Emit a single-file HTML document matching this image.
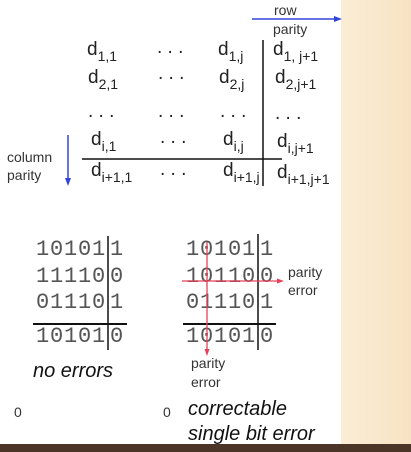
<!DOCTYPE html>
<html><head><style>
body{margin:0;width:411px;height:452px;overflow:hidden;background:#fff;position:relative;font-family:"Liberation Sans",sans-serif;color:#222}
.bg{position:absolute;left:341px;top:0;width:70px;height:452px;background:linear-gradient(90deg,#fbedd5,#f7e3c3)}
.bot{position:absolute;left:0;top:444px;width:411px;height:8px;background:#4a3526}
.a{position:absolute;white-space:nowrap;line-height:1}
.d{font-size:19px}
.d sub{font-size:14px;vertical-align:-6px}
.m{font-family:"Liberation Mono",monospace;font-size:22px;letter-spacing:0.8px;color:#555}
.s{font-size:14px;color:#333}
.it{font-style:italic;font-size:20px;color:#111}
</style></head><body>
<div class="bg"></div><div class="bot"></div>
<svg width="411" height="452" style="position:absolute;left:0;top:0">
<line x1="252" y1="19" x2="336" y2="19" stroke="#3344dd" stroke-width="1.5"/><polygon points="342,19 334,16 334,22" fill="#3344dd"/>
<line x1="68" y1="135" x2="68" y2="180" stroke="#3344dd" stroke-width="1.5"/><polygon points="68,186 65,178 71,178" fill="#3344dd"/>
<line x1="263" y1="40" x2="263" y2="186" stroke="#111" stroke-width="1.5"/>
<line x1="82" y1="159" x2="282" y2="159" stroke="#111" stroke-width="1.5"/>
<line x1="108" y1="236" x2="108" y2="350" stroke="#111" stroke-width="1.5"/>
<line x1="33" y1="324" x2="127" y2="324" stroke="#111" stroke-width="2"/>
<line x1="258" y1="234" x2="258" y2="350" stroke="#111" stroke-width="1.5"/>
<line x1="183" y1="324" x2="276" y2="324" stroke="#111" stroke-width="2"/>
</svg>
<div class="a s" style="left:274px;top:3px">row</div>
<div class="a s" style="left:273px;top:22px">parity</div>
<div class="a s" style="left:7px;top:150px">column</div>
<div class="a s" style="left:7px;top:168px">parity</div>

<div class="a d" style="left:87px;top:40px">d<sub>1,1</sub></div>
<div class="a d" style="left:157px;top:38px">. . .</div>
<div class="a d" style="left:218px;top:40px">d<sub>1,j</sub></div>
<div class="a d" style="left:273px;top:40px">d<sub>1, j+1</sub></div>

<div class="a d" style="left:88px;top:68px">d<sub>2,1</sub></div>
<div class="a d" style="left:158px;top:64px">. . .</div>
<div class="a d" style="left:219px;top:68px">d<sub>2,j</sub></div>
<div class="a d" style="left:275px;top:68px">d<sub>2,j+1</sub></div>

<div class="a d" style="left:88px;top:102px">. . .</div>
<div class="a d" style="left:158px;top:102px">. . .</div>
<div class="a d" style="left:220px;top:102px">. . .</div>
<div class="a d" style="left:275px;top:104px">. . .</div>

<div class="a d" style="left:91px;top:130px">d<sub>i,1</sub></div>
<div class="a d" style="left:160px;top:128px">. . .</div>
<div class="a d" style="left:223px;top:130px">d<sub>i,j</sub></div>
<div class="a d" style="left:277px;top:132px">d<sub>i,j+1</sub></div>

<div class="a d" style="left:91px;top:161px">d<sub>i+1,1</sub></div>
<div class="a d" style="left:160px;top:160px">. . .</div>
<div class="a d" style="left:223px;top:161px">d<sub>i+1,j</sub></div>
<div class="a d" style="left:277px;top:163px">d<sub>i+1,j+1</sub></div>

<div class="a m" style="left:36px;top:239px">10101</div><div class="a m" style="left:110px;top:239px">1</div>
<div class="a m" style="left:36px;top:266px">11110</div><div class="a m" style="left:110px;top:266px">0</div>
<div class="a m" style="left:36px;top:292px">01110</div><div class="a m" style="left:110px;top:292px">1</div>
<div class="a m" style="left:36px;top:326px">10101</div><div class="a m" style="left:110px;top:326px">0</div>

<div class="a m" style="left:186px;top:239px">10101</div><div class="a m" style="left:260px;top:239px">1</div>
<div class="a m" style="left:186px;top:266px">10110</div><div class="a m" style="left:260px;top:266px">0</div>
<div class="a m" style="left:186px;top:292px">01110</div><div class="a m" style="left:260px;top:292px">1</div>
<div class="a m" style="left:186px;top:326px">10101</div><div class="a m" style="left:260px;top:326px">0</div>

<svg width="411" height="452" style="position:absolute;left:0;top:0">
<line x1="182" y1="281" x2="278" y2="281" stroke="#e8405a" stroke-width="1.3"/><polygon points="284,281 277,278.5 277,283.5" fill="#e8405a"/>
<line x1="207" y1="242" x2="207" y2="350" stroke="#e8405a" stroke-width="1.3"/><polygon points="207,356 204.5,349 209.5,349" fill="#e8405a"/>
</svg>
<div class="a s" style="left:288px;top:265px">parity</div>
<div class="a s" style="left:288px;top:283px">error</div>
<div class="a s" style="left:191px;top:356px">parity</div>
<div class="a s" style="left:191px;top:375px">error</div>

<div class="a it" style="left:33px;top:361px">no errors</div>
<div class="a s" style="left:14px;top:405px">0</div>
<div class="a s" style="left:163px;top:405px">0</div>
<div class="a it" style="left:188px;top:399px">correctable</div>
<div class="a it" style="left:188px;top:424px">single bit error</div>
</body></html>
